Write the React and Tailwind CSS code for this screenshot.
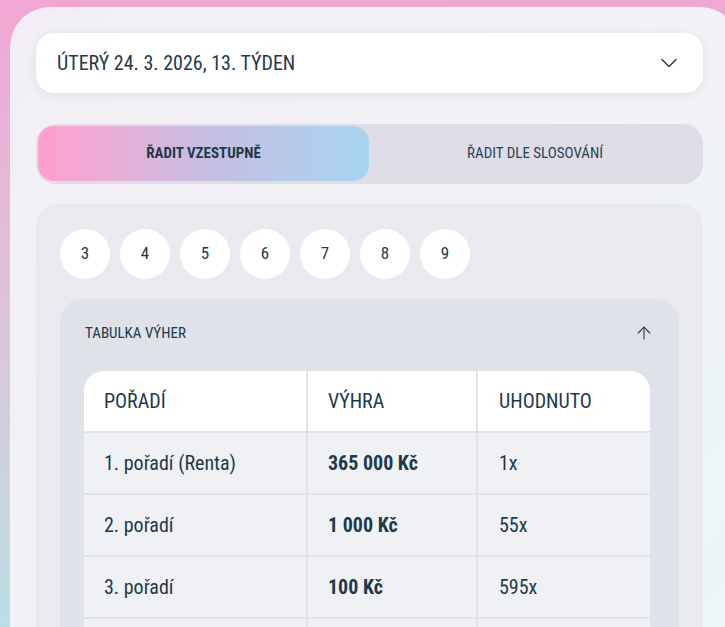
import { ChevronDown, ArrowUp } from 'lucide-react';

const font = { fontFamily: '"Roboto Condensed", "Liberation Sans Narrow", "DejaVu Sans Condensed", sans-serif' };

const rows = [
  { rank: '1. pořadí (Renta)', win: '365 000 Kč', hits: '1x' },
  { rank: '2. pořadí', win: '1 000 Kč', hits: '55x' },
  { rank: '3. pořadí', win: '100 Kč', hits: '595x' },
  { rank: '4. pořadí', win: '20 Kč', hits: '5 210x' },
];

const App = () => {
  return (
    <div
      className="w-[725px] h-[627px] overflow-hidden bg-gradient-to-b from-[#f0a6d2] via-[#dcc4dc] to-[#b9dfe6] pt-[7px] pl-[10px]"
      style={font}
    >
      <div className="w-[730px] h-[700px] rounded-[40px] bg-gradient-to-br from-[#f3eef5] via-[#f1f2f6] to-[#eaf7f8] pt-[26px] pl-[26px] pr-[32px] text-[#1e3a4a]">
        <div className="w-[667px] flex flex-col gap-[31px]">
          {/* Date select */}
          <div className="h-[60px] bg-white rounded-[18px] shadow-[0_2px_10px_rgba(40,40,80,0.08)] flex items-center justify-between pl-[21px] pr-[20px]">
            <span className="text-[20px]">ÚTERÝ 24. 3. 2026, 13. TÝDEN</span>
            <ChevronDown size={28} strokeWidth={1.2} />
          </div>

          {/* Sort toggle */}
          <div className="h-[60px] rounded-[20px] bg-[#dedce7] p-[2px] flex">
            <div className="w-[331px] h-[55px] rounded-[16px] bg-gradient-to-r from-[#ff9ecd] via-[#c6bde2] to-[#a6d5f0] flex items-center justify-center text-[15px] font-bold">
              ŘADIT VZESTUPNĚ
            </div>
            <div className="flex-1 h-[55px] flex items-center justify-center text-[15px] text-[#2a4656]">
              ŘADIT DLE SLOSOVÁNÍ
            </div>
          </div>

          {/* Results panel */}
          <div className="-mt-[11px] rounded-[22px] bg-[#e8e9ee]/90 pt-[25px] px-[24px] pb-[40px]">
            <div className="flex gap-[10px]">
              {[3, 4, 5, 6, 7, 8, 9].map((n) => (
                <div key={n} className="w-[50px] h-[50px] rounded-full bg-white flex items-center justify-center text-[17px]">
                  {n}
                </div>
              ))}
            </div>

            <div className="mt-[20px] rounded-[22px] bg-[#dfe2e8] pt-[24px] pl-[24px] pr-[29px] pb-[30px]">
              <div className="flex items-center justify-between pl-[1px] -mr-[4px] h-[20px]">
                <span className="text-[15px]">TABULKA VÝHER</span>
                <ArrowUp size={20} strokeWidth={1.3} />
              </div>

              <div className="mt-[28px] w-[566px] rounded-t-[20px] overflow-hidden">
                <div className="grid grid-cols-[224px_170px_1fr] bg-white h-[60px] text-[20px]">
                  <div className="flex items-center pl-[20px] border-r-2 border-[#dfe3e8]">POŘADÍ</div>
                  <div className="flex items-center pl-[20px] border-r-2 border-[#dfe3e8]">VÝHRA</div>
                  <div className="flex items-center pl-[21px]">UHODNUTO</div>
                </div>
                {rows.map((r) => (
                  <div key={r.rank} className="grid grid-cols-[224px_170px_1fr] bg-[#eff1f4] h-[62px] border-t-2 border-[#dfe3e8] text-[20px]">
                    <div className="flex items-center pl-[20px] border-r-2 border-[#dfe3e8]">{r.rank}</div>
                    <div className="flex items-center pl-[20px] border-r-2 border-[#dfe3e8] font-bold">{r.win}</div>
                    <div className="flex items-center pl-[21px]">{r.hits}</div>
                  </div>
                ))}
              </div>
            </div>
          </div>
        </div>
      </div>
    </div>
  );
};

export default App;
